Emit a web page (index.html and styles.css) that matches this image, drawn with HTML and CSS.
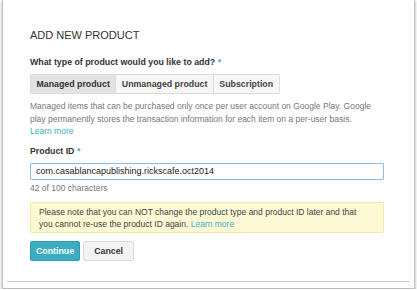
FILE: index.html
```html
<!DOCTYPE html>
<html lang="en">
<head>
    <meta charset="UTF-8">
    <title>Add New Product</title>
    <link rel="stylesheet" href="styles.css">
</head>
<body>
    <div class="dialog">
        <h2 class="dialog-title">ADD NEW PRODUCT</h2>

        <div class="field-label">What type of product would you like to add? <span class="req">*</span></div>
        <div class="segmented">
            <button class="seg active">Managed product</button>
            <button class="seg">Unmanaged product</button>
            <button class="seg">Subscription</button>
        </div>
        <p class="help">Managed items that can be purchased only once per user account on Google Play. Google play permanently stores the transaction information for each item on a per-user basis. <br><a href="#" class="link">Learn more</a></p>

        <div class="field-label id-label">Product ID <span class="req">*</span></div>
        <input type="text" class="text-input" value="com.casablancapublishing.rickscafe.oct2014">
        <div class="counter">42 of 100 characters</div>

        <div class="notice">
            Please note that you can NOT change the product type and product ID later and that you cannot re-use the product ID again. <a href="#" class="link">Learn more</a>
        </div>

        <div class="actions">
            <button class="btn btn-primary">Continue</button>
            <button class="btn btn-default">Cancel</button>
        </div>

        <div class="footer-line"></div>
    </div>
</body>
</html>
```

FILE: styles.css
```css
body {
    margin: 0;
    background: #fff;
    font-family: "Liberation Sans", Arial, sans-serif;
    color: #333;
}
.dialog {
    margin-left: 2px;
    width: 354px;
    padding: 28px 30px 6px 27px;
    border-left: 1px solid #c4c4c4;
    border-right: 1px solid #c4c4c4;
    border-bottom: 1px solid #bbb;
    box-shadow: 0 1px 3px rgba(0, 0, 0, 0.35);
    background: #fff;
}
.dialog-title {
    margin: 0;
    font-size: 11px;
    line-height: 14px;
    font-weight: normal;
    color: #333;
}
.field-label {
    margin-top: 14px;
    font-size: 8.8px;
    line-height: 12px;
    font-weight: bold;
    color: #333;
}
.req {
    color: #3ab0c4;
}
.segmented {
    display: flex;
    margin-top: 6px;
}
.seg {
    height: 20px;
    padding: 0 5.5px;
    border: 1px solid #dcdcdc;
    border-left: none;
    background: #f6f6f6;
    font-family: inherit;
    font-size: 8.8px;
    font-weight: bold;
    color: #444;
}
.seg:first-child {
    border-left: 1px solid #dcdcdc;
    border-radius: 2px 0 0 2px;
}
.seg:last-child {
    border-radius: 0 2px 2px 0;
}
.seg.active {
    background: #e2e2e2;
    color: #333;
}
.help {
    margin: 6px 0 0;
    font-size: 8.5px;
    line-height: 12.5px;
    color: #777;
}
.link {
    color: #3ab0c4;
    text-decoration: none;
}
.id-label {
    margin-top: 7px;
}
.text-input {
    display: block;
    box-sizing: border-box;
    width: 100%;
    height: 17px;
    margin-top: 6px;
    padding: 0 5px;
    border: 1px solid #8fbde6;
    border-radius: 1px;
    font-family: inherit;
    font-size: 9px;
    color: #222;
    outline: none;
}
.counter {
    margin-top: 2px;
    font-size: 8.5px;
    line-height: 12px;
    color: #777;
}
.notice {
    margin-top: 8px;
    padding: 3px 20px 2px 8px;
    border: 1px solid #f3e7a6;
    border-radius: 2px;
    background: #fdf9d4;
    font-size: 8.5px;
    line-height: 12px;
    color: #444;
}
.actions {
    display: flex;
    gap: 3px;
    margin-top: 8px;
}
.btn {
    height: 20px;
    padding: 0 5px;
    border-radius: 2px;
    font-family: inherit;
    font-size: 8.8px;
    font-weight: bold;
}
.btn-primary {
    background: #3badc1;
    border: 1px solid #2f9db1;
    color: #fff;
}
.btn-default {
    width: 51px;
    background: #f3f3f3;
    border: 1px solid #dcdcdc;
    color: #333;
}
.footer-line {
    margin: 20px -26px 0 -23px;
    border-top: 1px solid #ccc;
}
```
